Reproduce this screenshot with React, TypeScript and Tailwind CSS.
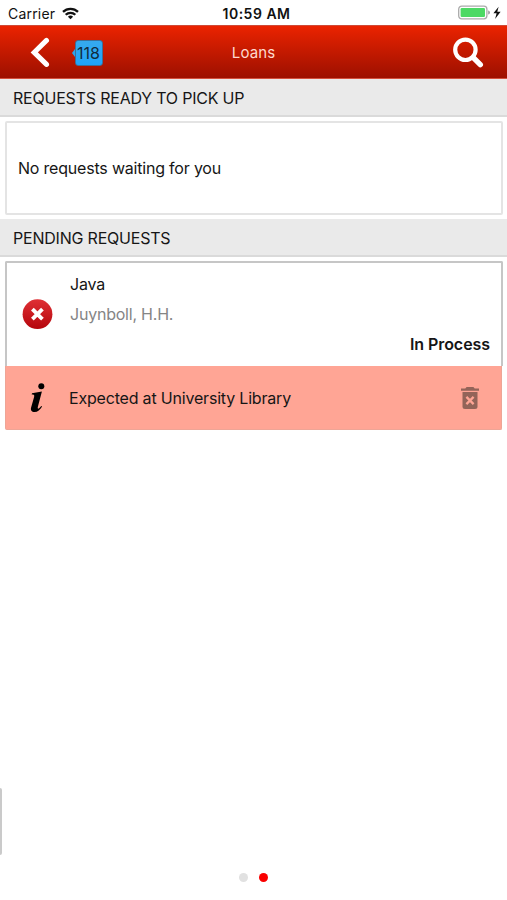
import type { ReactNode } from "react";

interface PendingRequest {
  id: number;
  title: string;
  author: string;
  status: string;
  message: string;
}

const pendingRequests: PendingRequest[] = [
  {
    id: 1,
    title: "Java",
    author: "Juynboll, H.H.",
    status: "In Process",
    message: "Expected at University Library",
  },
];

function StatusBar() {
  return (
    <div className="grid h-[25px] grid-cols-3 items-center bg-white pt-px text-[#111]">
      <div className="flex items-center pl-2">
        <span className="w-[47px] whitespace-nowrap text-[14px] tracking-[0.2px]">Carrier</span>
        <svg className="ml-[7px] h-[13px] w-[17px]" viewBox="0 0 17 13" fill="none" stroke="#111" strokeWidth="2.3">
          <path d="M1 4.9a10.7 10.7 0 0 1 15 0" />
          <path d="M3.7 7.8a6.8 6.8 0 0 1 9.6 0" />
          <path d="M8.5 12.3L5.9 9.7a3.7 3.7 0 0 1 5.2 0z" fill="#111" stroke="none" />
        </svg>
      </div>
      <span className="pl-[6px] text-center text-[14px] font-semibold whitespace-nowrap tracking-[0.5px]">10:59 AM</span>
      <svg className="ml-auto mr-[5px] h-4 w-[44px]" viewBox="0 0 44 16">
        <rect x="0.7" y="1.2" width="28.2" height="12.6" rx="3" fill="#fff" stroke="#aaa" strokeWidth="1.3" />
        <rect x="2.6" y="3" width="24.4" height="9" rx="1.2" fill="#4cd964" />
        <path d="M30.3 5.4c2 .7 2 3.5 0 4.2z" fill="#888" />
        <path d="M40.6 1.8L35.4 8.3h3.2l-1.5 5.6 5.5-7.2h-3.3z" fill="#111" />
      </svg>
    </div>
  );
}

function Header() {
  return (
    <header className="grid h-[54px] grid-cols-3 items-center border-t border-b border-t-[#cf4a37] border-b-[#d4513e] bg-linear-to-b from-[#eb2300] to-[#9d1000]">
      <div className="flex items-center pl-[30px]">
        <button aria-label="Back">
          <svg className="h-[30px] w-5" viewBox="0 0 20 30" fill="none" stroke="#fff" strokeWidth="5">
            <path d="M16.5 3.4L4.2 15.4l12.3 12" strokeLinecap="round" />
          </svg>
        </button>
        <div className="mt-[2px] ml-[22px] flex items-center">
          <svg className="h-2 w-[3px]" viewBox="0 0 3 8">
            <path d="M3 0v8L0 4z" fill="#2ba4ee" />
          </svg>
          <span className="flex h-[26px] w-7 items-center justify-center rounded-[3px] border border-[#3c6f99] bg-linear-to-b from-[#36a9ee] to-[#1ea4fa] pr-px text-[16px] text-[#112b3d]">
            118
          </span>
        </div>
      </div>
      <h1 className="pt-[2px] text-center text-[15px] tracking-[0.1px] text-[#ffd9ce]">Loans</h1>
      <button aria-label="Search" className="mr-[23px] ml-auto">
        <svg className="h-[31px] w-[31px]" viewBox="0 0 31 31" fill="none" stroke="#fff">
          <circle cx="12.4" cy="12.8" r="10.2" strokeWidth="4.2" />
          <path d="M20.3 20.7l7 7" strokeWidth="5.4" strokeLinecap="round" />
        </svg>
      </button>
    </header>
  );
}

function SectionTitle({ children }: { children: ReactNode }) {
  return (
    <h2 className="flex h-[38px] items-center border-b-2 border-[#dadada] bg-[#eaeaea] pt-px pl-[13px] text-[16px] tracking-[-0.21px]">
      {children}
    </h2>
  );
}

function RequestCard({ request }: { request: PendingRequest }) {
  return (
    <div className="mr-1 ml-[5px] mt-1">
      <div className="flex h-[105px] items-center rounded-t-[2px] border-2 border-b-0 border-[#c6c6c6] bg-white">
        <button aria-label="Cancel request" className="ml-[15px]">
          <svg className="h-[31px] w-[31px]" viewBox="0 0 31 31">
            <defs>
              <linearGradient id="cancel" x1="0" y1="0" x2="0" y2="1">
                <stop offset="0" stopColor="#df3035" />
                <stop offset="1" stopColor="#b5060c" />
              </linearGradient>
            </defs>
            <circle cx="15.5" cy="15.2" r="14.9" fill="url(#cancel)" />
            <path d="M11.7 11.4l7.4 7.4M19.1 11.4l-7.4 7.4" stroke="#fff" strokeWidth="3.8" strokeLinecap="square" />
          </svg>
        </button>
        <div className="mb-px ml-[17px] flex flex-1 flex-col pr-[11px] text-[16px] leading-[30px] tracking-[-0.22px]">
          <span>{request.title}</span>
          <span className="text-[#858585]">{request.author}</span>
          <span className="text-right font-semibold tracking-[-0.06px]">{request.status}</span>
        </div>
      </div>
      <div className="mr-px flex h-16 items-center rounded-b-[2px] border border-t-0 border-[#eea596] bg-[#ffa595]">
        <svg className="ml-[24px] h-[30px] w-4" viewBox="0 0 16 30">
          <circle cx="11.3" cy="3.2" r="3" />
          <path d="M2 10.2L11.9 8.6 8 23.3c-.6 2.1-.1 2.9 1.1 2 .9-.6 1.4-1.4 2.1-2.4l.9.6c-2 3.5-4.5 5.5-7.5 5.5-3 0-4.3-1.8-3.5-4.5l3-10.6c.4-1.6.1-2.3-1.2-2.4L1.7 11.4z" />
        </svg>
        <span className="ml-[23px] text-[16px] tracking-[-0.19px]">{request.message}</span>
        <button aria-label="Delete" className="mr-[22px] ml-auto">
          <svg className="h-6 w-[18px]" viewBox="0 0 18 24" fill="#936459">
            <path d="M0 2.5h4.3L5.6 1h6.8l1.3 1.5H18v2.2H0z" />
            <path d="M1.5 6h15v14.5a2.5 2.5 0 0 1-2.5 2.5H4a2.5 2.5 0 0 1-2.5-2.5z" />
            <path d="M5.4 10.9l7.2 7.2M12.6 10.9l-7.2 7.2" stroke="#ffa595" strokeWidth="2.3" />
          </svg>
        </button>
      </div>
    </div>
  );
}

export default function App() {
  return (
    <main className="relative flex h-[900px] w-[507px] flex-col overflow-hidden bg-white font-['Inter',sans-serif] text-[#161616]">
      <StatusBar />
      <Header />
      <section>
        <SectionTitle>REQUESTS READY TO PICK UP</SectionTitle>
        <div className="mr-1 ml-[5px] mt-1 flex h-[94px] items-center rounded-[2px] border-2 border-[#e4e4e4] bg-white pl-[11px] text-[16px] tracking-[-0.2px]">
          No requests waiting for you
        </div>
      </section>
      <section className="mt-[4px]">
        <SectionTitle>PENDING REQUESTS</SectionTitle>
        {pendingRequests.map((request) => (
          <RequestCard key={request.id} request={request} />
        ))}
      </section>

      {/* Page dots */}
      <div className="mt-auto mb-[18px] flex justify-center gap-[11px]">
        <span className="h-[9px] w-[9px] rounded-full bg-[#e1e1e1]" />
        <span className="h-[9px] w-[9px] rounded-full bg-[#fa0000]" />
      </div>

      {/* Side drawer handle */}
      <div className="absolute top-[788px] left-0 h-[67px] w-[2px] rounded-r bg-[#cacaca]" />
    </main>
  );
}
